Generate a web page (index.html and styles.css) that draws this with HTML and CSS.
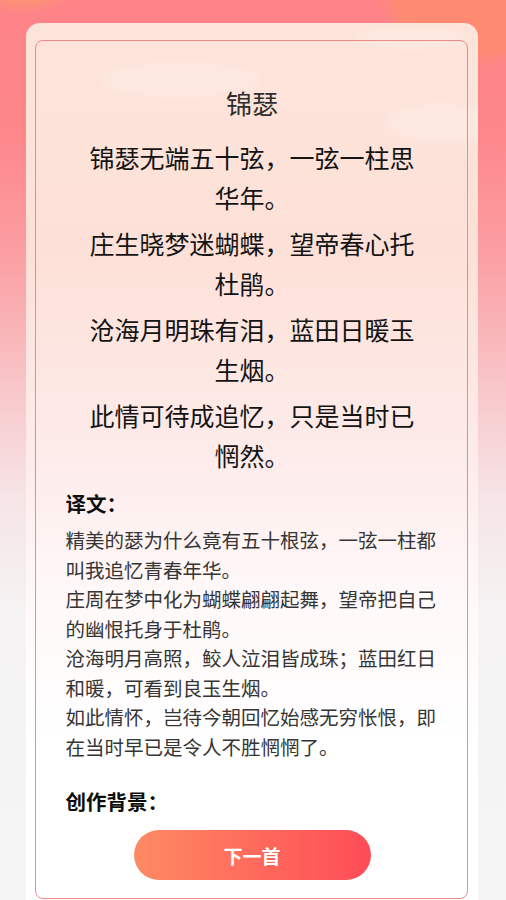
FILE: index.html
```html
<!DOCTYPE html>
<html lang="zh">
<head>
<meta charset="utf-8">
<link rel="stylesheet" href="styles.css">
</head>
<body>
<div class="page">
  <div class="blob blob-left"></div>
  <div class="blob blob-right"></div>
  <div class="card">
    <div class="cloud cloud-1"></div>
    <div class="cloud cloud-2"></div>
    <div class="cloud cloud-3"></div>
    <div class="inner">
      <h1 class="title">锦瑟</h1>
      <div class="poem">
        <p class="stanza">锦瑟无端五十弦，一弦一柱思华年。</p>
        <p class="stanza">庄生晓梦迷蝴蝶，望帝春心托杜鹃。</p>
        <p class="stanza">沧海月明珠有泪，蓝田日暖玉生烟。</p>
        <p class="stanza">此情可待成追忆，只是当时已惘然。</p>
      </div>
      <h2 class="section-title">译文：</h2>
      <div class="translation">
        <p>精美的瑟为什么竟有五十根弦，一弦一柱都叫我追忆青春年华。</p>
        <p>庄周在梦中化为蝴蝶翩翩起舞，望帝把自己的幽恨托身于杜鹃。</p>
        <p>沧海明月高照，鲛人泣泪皆成珠；蓝田红日和暖，可看到良玉生烟。</p>
        <p>如此情怀，岂待今朝回忆始感无穷怅恨，即在当时早已是令人不胜惘惘了。</p>
      </div>
      <h2 class="section-title section-bg">创作背景：</h2>
      <div class="actions">
        <button class="next-btn">下一首</button>
      </div>
    </div>
  </div>
</div>
</body>
</html>
```

FILE: styles.css
```css
html, body {
  margin: 0;
  padding: 0;
}
body {
  width: 506px;
  height: 900px;
  overflow: hidden;
  font-family: "Noto Sans CJK SC", "Noto Sans", sans-serif;
  background: linear-gradient(180deg, #fe8388 0%, #fd878b 15%, #fb9ea2 28%, #f8c3c6 42%, #f6e4e6 55%, #f5f3f3 68%, #f5f5f5 100%);
}
.page {
  position: relative;
  overflow: hidden;
  height: 900px;
  box-sizing: border-box;
  padding: 23px 28px 0 26px;
}
.blob {
  position: absolute;
  border-radius: 50%;
  filter: blur(6px);
  pointer-events: none;
}
.blob-left {
  left: -30px;
  top: -60px;
  width: 110px;
  height: 66px;
  background: #fd9a6e;
  opacity: 0.8;
}
.blob-right {
  right: -50px;
  top: -80px;
  width: 170px;
  height: 140px;
  background: #fe8e6a;
  opacity: 0.75;
}
.card {
  position: relative;
  overflow: hidden;
  border-radius: 14px 14px 0 0;
  padding: 17px 10px 0 9px;
  height: 900px;
  background: linear-gradient(180deg, #fde4da 0%, #fde1d8 25%, #fdeceb 48%, #fff8f8 62%, #ffffff 78%);
}
.cloud {
  position: absolute;
  border-radius: 50%;
  background: rgba(255, 255, 255, 0.22);
  filter: blur(4px);
}
.cloud-1 { left: 75px; top: 40px; width: 160px; height: 34px; }
.cloud-2 { left: 330px; top: 5px; width: 110px; height: 20px; }
.cloud-3 { left: 360px; top: 80px; width: 110px; height: 40px; }
.inner {
  position: relative;
  border: 1.5px solid rgba(230, 115, 112, 0.8);
  border-radius: 8px;
  padding: 42px 28.5px 18px 29.5px;
}
.title {
  margin: 0 0 14px;
  text-align: center;
  font-size: 26px;
  line-height: 40px;
  font-weight: 400;
  color: #2e2e2e;
}
.poem {
  max-width: 345px;
  margin: 0 auto;
}
.stanza {
  margin: 0 0 6px;
  text-align: center;
  font-size: 25px;
  line-height: 40px;
  color: #141414;
}
.stanza:last-child {
  margin-bottom: 0;
}
.section-title {
  margin: 14px 0 0;
  font-size: 20.5px;
  line-height: 28px;
  font-weight: 700;
  color: #0f0f0f;
}
.translation {
  margin-top: 8px;
}
.translation p {
  margin: 0;
  font-size: 19.5px;
  line-height: 29.5px;
  color: #353535;
}
.section-bg {
  margin-top: 26px;
}
.actions {
  display: flex;
  justify-content: center;
  margin-top: 15px;
}
.next-btn {
  width: 237px;
  height: 50px;
  border: none;
  border-radius: 25px;
  background: linear-gradient(90deg, #fd8b63 0%, #fe6e5d 45%, #fe4c57 100%);
  color: #ffffff;
  font-family: "Noto Sans CJK SC", "Noto Sans", sans-serif;
  font-size: 19px;
  font-weight: 700;
  padding: 0;
}
```
